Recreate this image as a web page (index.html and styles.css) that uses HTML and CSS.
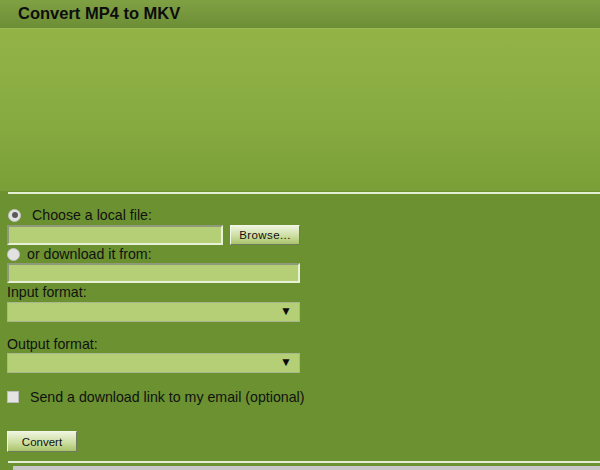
FILE: index.html
```html
<!DOCTYPE html>
<html lang="en">
<head>
    <meta charset="UTF-8">
    <title>Convert MP4 to MKV</title>
    <link rel="stylesheet" href="styles.css">
</head>
<body>
    <div class="title-bar">
        <h1>Convert MP4 to MKV</h1>
    </div>
    <div class="banner"></div>
    <div class="rule"></div>

    <form class="convert-form">
        <label class="radio-row first">
            <input type="radio" name="source" checked>
            <span>Choose a local file:</span>
        </label>
        <div class="file-row">
            <input type="text" class="field file-field">
            <button type="button" class="btn browse">Browse...</button>
        </div>
        <label class="radio-row second">
            <input type="radio" name="source">
            <span>or download it from:</span>
        </label>
        <input type="text" class="field url-field">

        <div class="label">Input format:</div>
        <div class="select">
            <span class="arrow">&#9660;</span>
        </div>

        <div class="label out">Output format:</div>
        <div class="select">
            <span class="arrow">&#9660;</span>
        </div>

        <label class="check-row">
            <input type="checkbox">
            <span>Send a download link to my email (optional)</span>
        </label>

        <button type="button" class="btn convert">Convert</button>
    </form>

    <div class="footer-rule"></div>
    <div class="footer-bar"></div>
</body>
</html>
```

FILE: styles.css
```css
/* General */
body {
    margin: 0;
    font-family: 'Liberation Sans', Arial, sans-serif;
    background: #6b9130;
    color: #111;
    overflow: hidden;
}

/* Title bar */
.title-bar {
    height: 29px;
    background: linear-gradient(#80a044, #6c8e35);
    border-bottom: 1px solid #9aba55;
    box-sizing: border-box;
}

h1 {
    margin: 0;
    padding: 4px 0 0 18px;
    font-size: 16.5px;
    font-weight: bold;
    color: #0d0d0d;
}

/* Banner */
.banner {
    height: 162px;
    background: linear-gradient(#93b347, #86aa40 60%, #7a9f38);
}

.rule {
    height: 2px;
    margin: 1px 0 0 8px;
    background: #e4eed2;
}

/* Form */
.convert-form {
    padding: 0 0 0 7px;
    font-size: 14.2px;
}

.radio-row, .check-row {
    display: flex;
    align-items: center;
    height: 16px;
}

.radio-row.first {
    margin-top: 13px;
}

.radio-row.first input {
    margin-left: 1px;
}

.radio-row.first span {
    margin-left: 11px;
}

.radio-row.second {
    margin-top: 1px;
}

.radio-row.second span {
    margin-left: 7px;
}

.radio-row input {
    appearance: none;
    width: 13px;
    height: 13px;
    margin: 0;
    border-radius: 50%;
    background: #e2e2e2;
    border: 1px solid #c4c4c4;
    box-sizing: border-box;
    position: relative;
}

.radio-row input:checked::after {
    content: '';
    position: absolute;
    left: 2.5px;
    top: 2.5px;
    width: 6px;
    height: 6px;
    border-radius: 50%;
    background: #5a5a5a;
}

.file-row {
    display: flex;
    gap: 7px;
    margin-top: 2px;
}

.field {
    display: block;
    height: 20px;
    margin: 0;
    padding: 0;
    box-sizing: border-box;
    background: #b5cf77;
    border: 2px solid;
    border-color: #8f9a7a #e8f0d8 #e8f0d8 #8f9a7a;
}

.file-field {
    width: 216px;
}

.url-field {
    width: 293px;
    margin-top: 1px;
}

.btn {
    height: 20px;
    padding: 0;
    border: 1px solid;
    border-color: #f2f6e8 #6f7a5e #6f7a5e #f2f6e8;
    background: linear-gradient(#eef4dd, #c9dc9c 60%, #a9c46a);
    font-family: 'Liberation Sans', Arial, sans-serif;
    font-size: 11.5px;
    color: #111;
}

.browse {
    width: 70px;
    letter-spacing: 0.4px;
}

.label {
    margin-top: 2px;
    height: 15px;
    line-height: 15px;
}

.label.out {
    margin-top: 15px;
}

.select {
    position: relative;
    width: 293px;
    height: 20px;
    margin-top: 2px;
    box-sizing: border-box;
    background: #b5cf77;
    border: 1px solid #a9b88c;
}

.label.out + .select {
    margin-top: 1px;
}

.arrow {
    position: absolute;
    right: 7px;
    top: 1px;
    font-size: 12px;
    color: #0a0a0a;
}

.check-row {
    margin-top: 16px;
}

.check-row input {
    appearance: none;
    width: 12px;
    height: 12px;
    margin: 0 11px 0 0;
    background: #e4e4e4;
    border: 1px solid #bdbdbd;
    box-sizing: border-box;
}

.convert {
    display: block;
    width: 70px;
    height: 21px;
    margin-top: 26px;
}

/* Footer */
.footer-rule {
    height: 2px;
    margin: 9px 0 0 8px;
    background: #e4eed2;
}

.footer-bar {
    height: 4px;
    margin: 3px 0 0 13px;
    background: #c8c8c8;
}
```
